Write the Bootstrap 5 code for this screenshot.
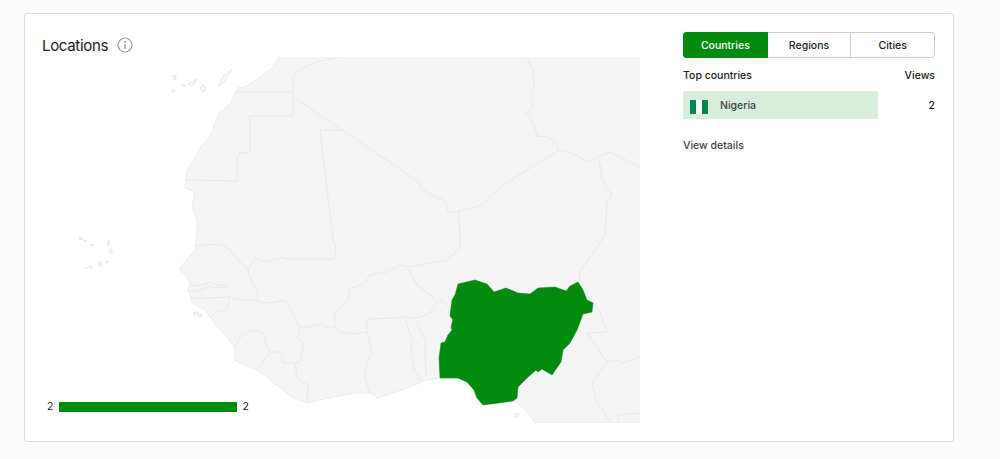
<!DOCTYPE html>
<html lang="en"><head><meta charset="utf-8"><title>Locations</title>
<link href="https://cdn.jsdelivr.net/npm/bootstrap@5.3.0/dist/css/bootstrap.min.css" rel="stylesheet">
<style>
body{background:#fbfbfb;font-family:Inter,"Liberation Sans",sans-serif;color:#202223;}
.loc-page{padding:13px 46px 17px 24px;}
.loc-card{border:1px solid #dcdcdc;border-radius:3px;background:#fff;padding:17px 17px 18px 17px;gap:43px;}
.loc-left{width:598px;position:relative;flex:none;}
.loc-right{width:252px;flex:none;}
.loc-head{height:26px;gap:9px;}
.loc-title{font-size:15px;font-weight:400;line-height:26px;padding-top:3px;margin:0;color:#202223;letter-spacing:-.32px;}
.loc-info{margin-top:1px;}
.loc-map{display:block;width:598px;height:366px;}
.land{fill:#f5f5f5;stroke:#e7e7e7;stroke-width:.8;stroke-linejoin:round;}
.bord{fill:none;stroke:#e6e6e6;stroke-width:.8;stroke-linejoin:round;}
.isle{fill:#f8f8f8;stroke:#dedede;stroke-width:.7;}
.ng{fill:#008a0e;stroke:#008a0e;stroke-width:.5;}
.loc-legend{position:absolute;left:5px;bottom:11px;height:10px;font-size:10.5px;line-height:10px;color:#202223;gap:6px;}
.loc-legend .loc-end{margin-left:-1px;}
.loc-bar{width:178px;height:10px;background:#008a0e;}
.btn-group>.tab-btn{flex:1 1 0;font-size:10.5px;font-weight:500;height:26px;line-height:24px;padding:1px 0 0;color:#202223;border-color:#c9cccf;background:#fff;--bs-btn-hover-color:#202223;}
.btn-group>.tab-btn:first-child{border-radius:3px 0 0 3px;}
.btn-group>.tab-btn:last-child{border-radius:0 3px 3px 0;}
.btn-group>.tab-btn.active,.btn-group>.tab-btn.active:hover{background:#008a0e;border-color:#008a0e;color:#fff;}
.loc-th{font-size:10.5px;font-weight:500;margin-top:11px;line-height:14px;margin-bottom:8px;}
.loc-row{font-size:10.5px;font-weight:500;height:28px;}
.loc-row span.loc-txt{padding-top:2px;}
.loc-fill{width:195px;height:28px;background:#d9eddd;padding-left:7px;gap:12px;color:#3c4446;}
.flag{width:18px;height:14px;display:flex;flex:none;margin-top:4px;}
.flag i{flex:1;background:#008751;}
.flag i:nth-child(2){background:#fff;}
.loc-link{display:inline-block;margin-top:20px;font-size:10.5px;font-weight:500;line-height:14px;color:#3c4446;text-decoration:none;}
</style></head>
<body>
<div class="loc-page">
<div class="loc-card d-flex">
 <div class="loc-left">
  <div class="loc-head d-flex align-items-center">
   <h2 class="loc-title">Locations</h2>
   <svg class="loc-info" width="16" height="16" viewBox="0 0 16 16" aria-hidden="true"><circle cx="8" cy="8" r="7" fill="none" stroke="#9a9a9a" stroke-width="1.2"/><circle cx="8" cy="5" r="1" fill="#9a9a9a"/><rect x="7.3" y="7" width="1.4" height="5" fill="#9a9a9a"/></svg>
  </div>
  <svg class="loc-map" viewBox="42 57 598 366" aria-label="Map of West Africa">
   <path class="land" d="M279 57L273 67L263 75L253 82L247 86L238 88L235 92L231 103L220 112L215 123L210 137L202 145L199 150L193 163L188 168L186 178L185 188L190 190L195 193L192 207L197 220L197 235L195 250L184 263L179 269L184 273L190 283L188 290L191 298L191 300L198 307L205 309L212 320L227 337L235 348L235 360L240 363L257 370L273 382L293 398L307 403L333 397L357 393L370 393L378 398L407 388L427 380L440 378L458 378L467 382L474 390L477 398L483 405L513 401L520 405L528 412L535 423L641 423L641 56L279 56Z"/>
   <path class="bord" d="M338 57L313 63L300 70L293 77L293 116L250 116L250 152L240 153L237 158L237 181L186 180"/>
   <path class="bord" d="M236 92L293 92"/>
   <path class="bord" d="M293 97L400 169L420 183L420 188L432 195L445 201L447 208L449 213L459 211L480 206L503 185L559 150"/>
   <path class="bord" d="M527 57L533 70L534 88L531 97L533 108L526 112L534 125L537 136L547 137L555 142L559 150L577 155L587 162L610 152L640 167"/>
   <path class="bord" d="M599 159L602 178L607 188L612 194L607 203L605 235L580 272L579 282"/>
   <path class="bord" d="M343 130L320 130L333 240L336 248L334 259L285 259L284 257L267 262L255 258L248 270L228 248L220 244L195 246"/>
   <path class="bord" d="M459 211L460 248L447 260L410 267L400 265L387 272L370 275L363 285L350 288L348 300L335 313L335 327"/>
   <path class="bord" d="M248 270L252 283L258 293L258 302L272 303L285 300L292 312L300 328L308 327L318 325L323 323L325 327L335 327L340 332L352 334L367 332L372 353L367 363L364 375L370 393"/>
   <path class="bord" d="M367 332L367 319L397 318L405 317L417 318L430 313L436 303L433 297L417 285L407 268"/>
   <path class="bord" d="M405 318L412 340L411 353L414 370L422 381M416 322L425 340L426 378M436 303L440 300L450 307"/>
   <path class="bord" d="M300 328L298 338L303 343L302 352L300 362L295 363L283 363L281 352L270 352L257 370M295 363L297 378L308 385L307 403"/>
   <path class="bord" d="M235 348L240 337L253 330L263 333L267 347L270 352"/>
   <path class="bord" d="M190 298L208 298L228 297L242 300L257 300M228 297L229 302L227 309L217 312L210 317"/>
   <path class="bord" d="M190 286L202 285L210 282L218 285L227 286L226 288L217 287L208 287L198 291L188 291"/>
   <path class="bord" d="M585 292L600 312L607 332L587 333L607 362L618 360L622 363L640 357M607 362L592 383L597 402L610 422M618 423L618 415L640 413"/>
   <path class="isle" d="M232 69L228 76L222 84L218 86L222 78L227 73ZM203 85L206 87L205 91L202 91L200 88ZM188 84L192 82L196 79L195 83L191 86ZM183 84l2 1-1 2-2-1ZM173 76l3 0 0 3-2 1ZM172 90l3 0-1 2-2 0ZM80 237l3 1-1 2-3-1ZM84 240l3 1-1 1-2-1ZM90 244l4 1-2 1-2-1ZM108 240l1 0 0 5-1 0ZM110 250l2 0 0 3-3 0ZM99 262l3 1 0 3-3 0ZM106 261l2 0 0 2-2 0ZM89 266l3 0 0 2-3 0ZM86 267l1 1-1 1ZM194 312l5 1-2 2-3 0ZM199 315l3-1-1 3-3 0ZM516 413l3 1-2 4-2-1Z"/>
   <path class="ng" d="M440 378L439 358L441 343L445 342L448 335L452 330L451 327L453 320L450 316L452 300L455 295L458 284L475 280L487 284L494 292L506 288L518 293L530 294L538 288L555 287L566 291L570 286L578 282L583 290L587 300L593 303L592 312L583 314L577 330L570 343L563 350L561 362L552 375L542 369L538 372L536 370L527 378L518 387L517 398L513 401L483 405L477 398L474 390L467 382L458 378Z"/>
  </svg>
  <div class="loc-legend d-flex align-items-center"><span>2</span><div class="loc-bar"></div><span class="loc-end">2</span></div>
 </div>
 <div class="loc-right">
  <div class="btn-group w-100" role="group">
   <button type="button" class="btn tab-btn active">Countries</button>
   <button type="button" class="btn tab-btn">Regions</button>
   <button type="button" class="btn tab-btn">Cities</button>
  </div>
  <div class="loc-th d-flex justify-content-between"><span>Top countries</span><span>Views</span></div>
  <div class="loc-row d-flex justify-content-between align-items-center">
   <div class="loc-fill d-flex align-items-center"><span class="flag"><i></i><i></i><i></i></span><span class="loc-txt">Nigeria</span></div><span class="loc-txt">2</span>
  </div>
  <a class="loc-link" href="#">View details</a>
 </div>
</div>
</div>
</body></html>
